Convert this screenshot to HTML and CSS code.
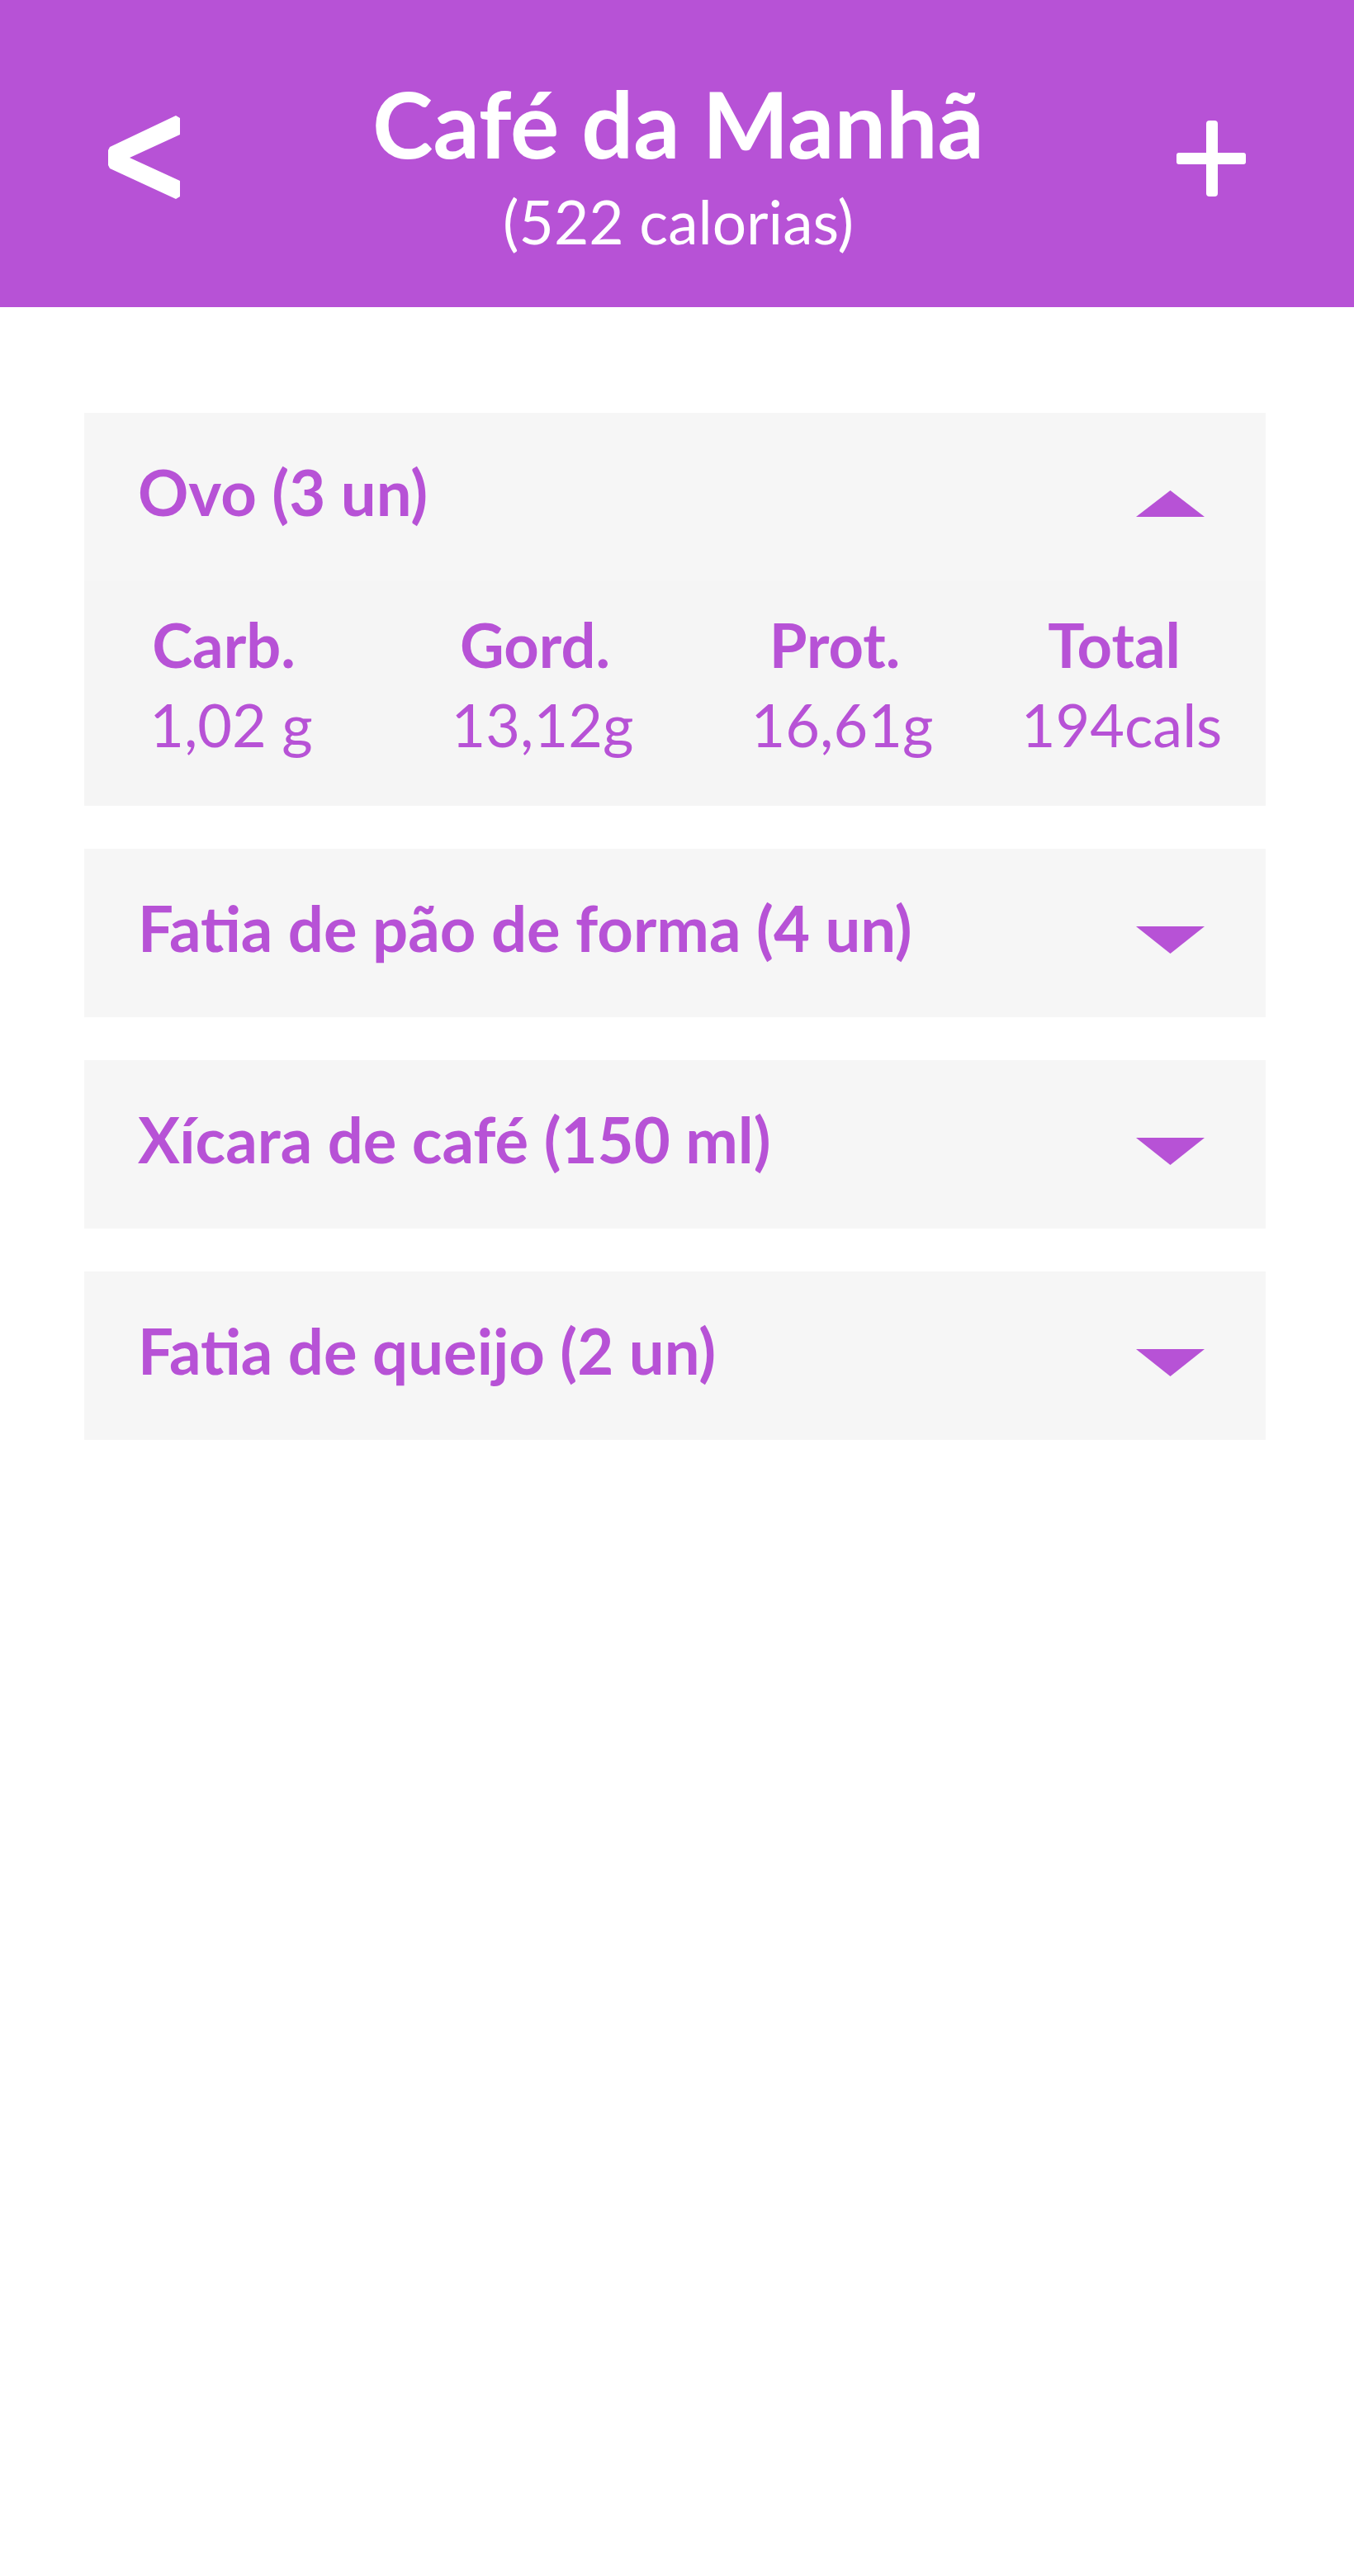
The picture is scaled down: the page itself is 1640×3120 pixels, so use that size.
FILE: index.html
```html
<!DOCTYPE html>
<html lang="pt-BR">
<head>
<meta charset="utf-8">
<title>Café da Manhã</title>
<link rel="stylesheet" href="styles.css">
</head>
<body>
<header class="topbar">
  <button class="icon-btn back" aria-label="Voltar">
    <svg width="87" height="101" viewBox="0 0 87 101"><polygon points="82,0 87,3 87,23 26,51 87,79 87,98 82,101 2,64 0,60 0,42 2,38" fill="#ffffff"/></svg>
  </button>
  <div class="title-block">
    <h1 class="title">Café da Manhã</h1>
    <p class="subtitle">(522 calorias)</p>
  </div>
  <button class="icon-btn add" aria-label="Adicionar">
    <svg width="84" height="92" viewBox="0 0 84 92"><rect x="36" y="0" width="14" height="92" rx="4" fill="#ffffff"/><rect x="0" y="39" width="84" height="14" rx="3" fill="#ffffff"/></svg>
  </button>
</header>

<main class="list">
  <section class="card open">
    <div class="card-head">
      <span class="item-name">Ovo (3 un)</span>
      <svg class="caret up" width="83" height="32" viewBox="0 0 83 32"><polygon points="0,32 41.5,0 83,32" fill="#b752d6"/></svg>
    </div>
    <div class="macros">
      <div class="macro-label">Carb.</div>
      <div class="macro-label">Gord.</div>
      <div class="macro-label">Prot.</div>
      <div class="macro-label">Total</div>
      <div class="macro-value">1,02 g</div>
      <div class="macro-value">13,12g</div>
      <div class="macro-value">16,61g</div>
      <div class="macro-value">194cals</div>
    </div>
  </section>

  <section class="card">
    <div class="card-head">
      <span class="item-name">Fatia de pão de forma (4 un)</span>
      <svg class="caret down" width="83" height="33" viewBox="0 0 83 33"><polygon points="0,0 83,0 41.5,33" fill="#b752d6"/></svg>
    </div>
  </section>

  <section class="card">
    <div class="card-head">
      <span class="item-name">Xícara de café (150 ml)</span>
      <svg class="caret down" width="83" height="33" viewBox="0 0 83 33"><polygon points="0,0 83,0 41.5,33" fill="#b752d6"/></svg>
    </div>
  </section>

  <section class="card">
    <div class="card-head">
      <span class="item-name">Fatia de queijo (2 un)</span>
      <svg class="caret down" width="83" height="33" viewBox="0 0 83 33"><polygon points="0,0 83,0 41.5,33" fill="#b752d6"/></svg>
    </div>
  </section>
</main>
</body>
</html>
```

FILE: styles.css
```css
* {
  box-sizing: border-box;
}

html, body {
  margin: 0;
  padding: 0;
  background: #ffffff;
  font-family: "Lato", "Noto Sans", "DejaVu Sans", sans-serif;
}

.topbar {
  height: 372px;
  background: #b752d6;
  display: flex;
  align-items: flex-start;
  padding: 0 131px;
  color: #ffffff;
}

.icon-btn {
  background: none;
  border: 0;
  padding: 0;
  margin: 0;
  display: block;
  flex: 0 0 auto;
}

.icon-btn svg {
  display: block;
}

.back {
  margin-top: 140px;
}

.add {
  margin-top: 146px;
}

.title-block {
  flex: 1;
  text-align: center;
}

.title {
  margin: 89px 0 0;
  font-size: 111px;
  line-height: 120px;
  font-weight: 700;
}

.subtitle {
  margin: 7px 0 0;
  font-size: 73px;
  line-height: 105px;
  font-weight: 400;
}

.list {
  padding: 128px 107px 0 102px;
  display: flex;
  flex-direction: column;
  gap: 52px;
}

.card {
  background: #f6f6f6;
  color: #b752d6;
}

.card-head {
  height: 204px;
  display: flex;
  align-items: center;
  justify-content: space-between;
  padding: 0 74px 0 65px;
}

.item-name {
  font-size: 76px;
  line-height: 1;
  font-weight: 700;
  padding-bottom: 13px;
}

.caret {
  display: block;
  margin-top: 16px;
}

.macros {
  display: grid;
  grid-template-columns: 356px 398px 328px 1fr;
  padding: 29px 0 51px;
  background: #f5f5f5;
  text-align: center;
}

.macro-label,
.macro-value {
  line-height: 96px;
}

.macro-label {
  font-size: 74px;
  font-weight: 700;
  padding-right: 18px;
}

.macro-value {
  font-size: 72px;
  font-weight: 400;
}
```
